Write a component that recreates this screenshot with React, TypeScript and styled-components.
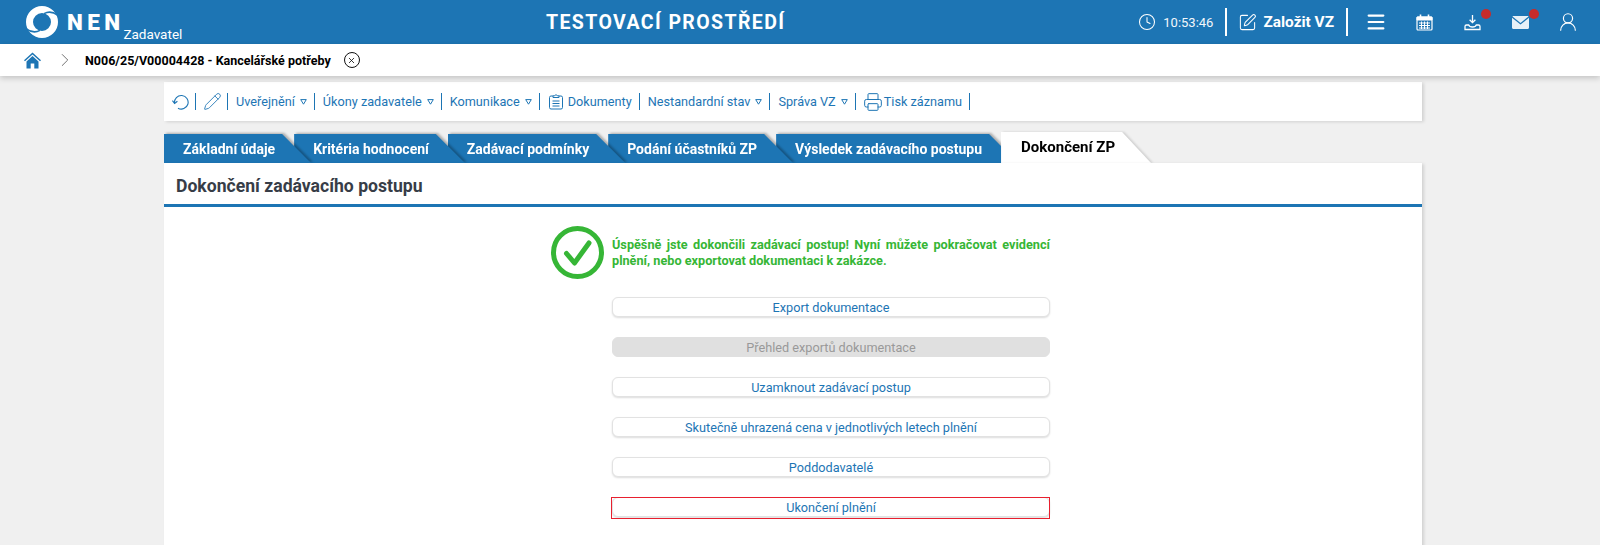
import { ReactNode } from "react";
import styled, { createGlobalStyle } from "styled-components";
import { Clock, Pencil, SquarePen, Printer, ChevronRight, X, UserRound, Menu } from "lucide-react";

const BLUE = "#1d75b4";

const GlobalStyle = createGlobalStyle`
  html, body {
    margin: 0;
    padding: 0;
    height: 545px;
    overflow: hidden;
    background: #f0f0f0;
    font-family: Roboto, "Liberation Sans", sans-serif;
  }
`;

const Header = styled.header`
  height: 44px;
  background: ${BLUE};
  color: #fff;
  display: flex;
  align-items: center;
`;

const Brand = styled.div`
  width: 546px;
  height: 44px;
  padding-left: 26px;
  box-sizing: border-box;
  display: flex;
  align-items: center;
`;

const BrandName = styled.span`
  margin-left: 9px;
  font-size: 22.5px;
  font-weight: 900;
  letter-spacing: 4.4px;
`;

const BrandRole = styled.span`
  align-self: flex-end;
  margin: 0 0 2px -1px;
  font-size: 13.5px;
  line-height: 15px;
`;

const EnvTitle = styled.div`
  width: 238px;
  text-align: center;
  white-space: nowrap;
  font-size: 19.5px;
  font-weight: 700;
  letter-spacing: 1.4px;
`;

const HeaderRight = styled.div`
  margin-left: auto;
  display: flex;
  align-items: center;
  padding-right: 24px;
`;

const HeaderGlyph = styled.span`
  width: 16px;
  height: 20px;
  display: flex;
  align-items: center;
  justify-content: center;
  svg {
    flex-shrink: 0;
  }
`;

const Time = styled.span`
  margin-left: 8px;
  font-size: 13px;
  color: #f2f7fb;
`;

const HeaderDivider = styled.span`
  width: 2px;
  height: 28px;
  margin: 0 12px;
  background: #fff;
`;

const CreateLabel = styled.span`
  margin-left: 8px;
  font-size: 15.4px;
  font-weight: 700;
`;

const HeaderIcon = styled.span<{ $first?: boolean }>`
  position: relative;
  width: 16px;
  height: 18px;
  margin-left: ${(p) => (p.$first ? "8px" : "32px")};
  display: flex;
  align-items: center;
  justify-content: center;
  svg {
    flex-shrink: 0;
  }
`;

const Dot = styled.span`
  position: absolute;
  top: -4px;
  left: 17px;
  width: 10px;
  height: 10px;
  border-radius: 50%;
  background: #c62b2b;
`;

const Breadcrumb = styled.nav`
  position: relative;
  height: 32px;
  background: #fff;
  box-shadow: 0 2px 6px rgba(0, 0, 0, 0.2);
  display: flex;
  align-items: center;
  padding-left: 24px;
`;

const Separator = styled.span`
  margin-left: 13px;
  display: flex;
  color: #666;
`;

const Crumb = styled.span`
  margin: 0 13px 0 9px;
  font-size: 12.5px;
  font-weight: 700;
  color: #000;
  white-space: nowrap;
`;

const CloseCircle = styled.span`
  width: 14px;
  height: 14px;
  border: 1px solid #111;
  border-radius: 50%;
  display: flex;
  align-items: center;
  justify-content: center;
`;

const Main = styled.main`
  width: 1258px;
  margin: 6px 0 0 164px;
`;

const Toolbar = styled.div`
  height: 39px;
  background: #fff;
  box-shadow: 2px 1px 3px rgba(0, 0, 0, 0.13);
  display: flex;
  align-items: center;
  padding-left: 8px;
  color: ${BLUE};
  font-size: 12.7px;
  white-space: nowrap;
`;

const ToolItem = styled.span`
  display: flex;
  align-items: center;
`;

const ToolIcon = styled.span<{ $width: number; $gap?: number }>`
  width: ${(p) => p.$width}px;
  height: 20px;
  margin-right: ${(p) => p.$gap ?? 0}px;
  display: flex;
  align-items: center;
  justify-content: center;
  svg {
    flex-shrink: 0;
  }
`;

const Caret = styled.svg`
  margin-left: 5px;
  margin-top: 1px;
`;

const ToolSep = styled.span`
  width: 1px;
  height: 17px;
  margin: 0 8px 0 7px;
  background: ${BLUE};
`;

const Tabs = styled.div`
  height: 31px;
  margin-top: 11px;
  display: flex;
  align-items: flex-end;
`;

const TabSlot = styled.div<{ $order: number; $active?: boolean }>`
  position: relative;
  z-index: ${(p) => p.$order};
  margin-right: -17px;
  filter: ${(p) =>
    p.$active
      ? "drop-shadow(2px 0 1px rgba(0, 0, 0, 0.14))"
      : "drop-shadow(2px -1px 1px rgba(0, 0, 0, 0.28))"};
`;

const TabShape = styled.div<{ $active?: boolean }>`
  height: ${(p) => (p.$active ? "31px" : "29px")};
  padding: ${(p) => (p.$active ? "0 36px 2px 20px" : "0 36px 0 19px")};
  box-sizing: border-box;
  display: flex;
  align-items: center;
  font-size: ${(p) => (p.$active ? "15px" : "14px")};
  font-weight: 700;
  white-space: nowrap;
  color: ${(p) => (p.$active ? "#000" : "#fff")};
  background: ${(p) => (p.$active ? "#fff" : BLUE)};
  clip-path: polygon(0 0, calc(100% - 29px) 0, 100% 100%, 0 100%);
`;

const Panel = styled.section`
  position: relative;
  z-index: 10;
  height: 400px;
  background: #fff;
  box-shadow: 2px 1px 3px rgba(0, 0, 0, 0.13);
`;

const PanelTitle = styled.h2`
  margin: 0;
  height: 41px;
  padding: 5px 0 0 12px;
  box-sizing: border-box;
  display: flex;
  align-items: center;
  font-size: 17.6px;
  font-weight: 700;
  color: #373d47;
`;

const PanelRule = styled.div`
  height: 3px;
  background: ${BLUE};
`;

const PanelBody = styled.div`
  padding: 19px 0 0 387px;
`;

const SuccessRow = styled.div`
  display: flex;
  align-items: center;
  gap: 8px;
`;

const SuccessText = styled.p`
  width: 438px;
  margin: 0;
  font-size: 12.7px;
  line-height: 15.5px;
  font-weight: 700;
  color: #36b636;
  text-align: justify;
`;

const Actions = styled.div`
  width: 438px;
  margin: 18px 0 0 61px;
  display: flex;
  flex-direction: column;
  gap: 20px;
`;

const ActionButton = styled.button<{ $flagged?: boolean }>`
  position: relative;
  height: 20px;
  padding: 0;
  box-sizing: border-box;
  border: 1px solid #e2e2e2;
  border-radius: 6px;
  background: #fff;
  box-shadow: 0 1px 2px rgba(0, 0, 0, 0.14);
  color: ${BLUE};
  font-family: inherit;
  font-size: 12.7px;
  line-height: 17px;
  &:disabled {
    background: #e0e0e0;
    border-color: #e0e0e0;
    box-shadow: none;
    color: #999;
  }
  &::after {
    content: "";
    display: ${(p) => (p.$flagged ? "block" : "none")};
    position: absolute;
    inset: -1px -1px -3px -2px;
    border: 1px solid #e8202f;
  }
`;

function Logo() {
  return (
    <svg width="32" height="32" viewBox="0 0 32 32" fill="none">
      <circle cx="16" cy="16" r="12.5" stroke="#fff" strokeWidth="7" />
      <path d="M32 9.5C27 5.5 22 5.5 18 7.6" stroke={BLUE} strokeWidth="1.5" />
      <path d="M0 22.5C5 26.5 10 26.5 14 24.4" stroke={BLUE} strokeWidth="1.5" />
    </svg>
  );
}

function RefreshIcon() {
  return (
    <svg width="17" height="17" viewBox="0 0 17 17" fill="none" stroke={BLUE} strokeWidth="1.1">
      <path d="M2.6 10.2A6.8 6.8 0 1 1 6 15.2" />
      <path d="M0.4 7.6l2.2 2.8 2.8-2.2" />
    </svg>
  );
}

function ClipboardIcon() {
  return (
    <svg width="14" height="17" viewBox="0 0 14 17" fill="none" stroke={BLUE} strokeWidth="1">
      <path d="M4 3H2A1.5 1.5 0 0 0 .5 4.5v10A1.5 1.5 0 0 0 2 16h10a1.5 1.5 0 0 0 1.5-1.5v-10A1.5 1.5 0 0 0 12 3h-2" />
      <path d="M4 4.5V2.8h1.6a1.5 1.5 0 0 1 2.8 0H10v1.7Z" />
      <path d="M3.5 8h7M3.5 10.5h7M3.5 13h7" />
    </svg>
  );
}

function CalendarIcon() {
  return (
    <svg width="17" height="17" viewBox="0 0 17 17" fill="none" stroke="#fff">
      <rect x="1" y="3" width="15" height="13" rx="1" fill={BLUE} strokeWidth="1.2" />
      <path d="M1 3h15v3H1z" fill="#fff" />
      <path d="M4.5 0.5v4M12.5 0.5v4" strokeWidth="1.6" />
      <path d="M3 9h11M3 11.5h11M3 14h11M5.5 7.5v7.5M8.5 7.5v7.5M11.5 7.5v7.5" strokeWidth="1" />
    </svg>
  );
}

function InboxIcon() {
  return (
    <svg width="17" height="17" viewBox="0 0 17 17" fill="none" stroke="#fff" strokeWidth="1.3">
      <path d="M8.5 1v7.5M5.6 5.8l2.9 2.9 2.9-2.9" />
      <path d="M1 12.5c0-1 .6-1.5 1.5-1.5h2.2c.5 1.4 2 2 3.8 2s3.3-.6 3.8-2h2.2c.9 0 1.5.5 1.5 1.5v3H1z" />
    </svg>
  );
}

function MailIcon() {
  return (
    <svg width="17" height="13" viewBox="0 0 17 13">
      <path d="M1.5 0h14c.4 0 .8.1 1 .4L8.5 7 .5.4c.2-.3.6-.4 1-.4Z" fill="#e8f1f8" />
      <path d="M0 1.8V11.5C0 12.4.6 13 1.5 13h14c.9 0 1.5-.6 1.5-1.5V1.8L8.5 8.6Z" fill="#e8f1f8" />
    </svg>
  );
}

function HomeIcon() {
  return (
    <svg width="17" height="17" viewBox="0 0 17 17" fill={BLUE}>
      <path d="M8.5 0.5 0 8.2l1 1.1 7.5-6.8L16 9.3l1-1.1Z" />
      <path d="M8.5 4 2.5 9.5V16.5h4.2v-5h3.6v5h4.2V9.5Z" />
    </svg>
  );
}

function CheckBadge() {
  return (
    <svg width="53" height="53" viewBox="0 0 53 53" fill="none" stroke="#36b636">
      <circle cx="26.5" cy="26.5" r="24" strokeWidth="5" />
      <path d="M15.5 27.5l8 9.5 14.5-20" strokeWidth="5" strokeLinecap="round" strokeLinejoin="round" />
    </svg>
  );
}

function DropItem({ children }: { children: ReactNode }) {
  return (
    <ToolItem>
      {children}
      <Caret width="7" height="6" viewBox="0 0 7 6" fill="none" stroke={BLUE}>
        <path d="M0.7 0.6h5.6L3.5 5.2Z" />
      </Caret>
    </ToolItem>
  );
}

const tabs = ["Základní údaje", "Kritéria hodnocení", "Zadávací podmínky", "Podání účastníků ZP", "Výsledek zadávacího postupu"];

const actions = ["Export dokumentace", "Přehled exportů dokumentace", "Uzamknout zadávací postup", "Skutečně uhrazená cena v jednotlivých letech plnění", "Poddodavatelé", "Ukončení plnění"];

export default function App() {
  return (
    <>
      <GlobalStyle />
      <Header>
        <Brand>
          <Logo />
          <BrandName>NEN</BrandName>
          <BrandRole>Zadavatel</BrandRole>
        </Brand>
        <EnvTitle>TESTOVACÍ PROSTŘEDÍ</EnvTitle>
        <HeaderRight>
          <HeaderGlyph>
            <Clock size={18} strokeWidth={1.4} />
          </HeaderGlyph>
          <Time>10:53:46</Time>
          <HeaderDivider />
          <HeaderGlyph>
            <SquarePen size={19} strokeWidth={1.3} />
          </HeaderGlyph>
          <CreateLabel>Založit VZ</CreateLabel>
          <HeaderDivider />
          <HeaderIcon $first>
            <Menu size={22} strokeWidth={2.4} />
          </HeaderIcon>
          <HeaderIcon>
            <CalendarIcon />
          </HeaderIcon>
          <HeaderIcon>
            <InboxIcon />
            <Dot />
          </HeaderIcon>
          <HeaderIcon>
            <MailIcon />
            <Dot />
          </HeaderIcon>
          <HeaderIcon>
            <UserRound size={22} strokeWidth={1.3} />
          </HeaderIcon>
        </HeaderRight>
      </Header>

      <Breadcrumb>
        <HomeIcon />
        <Separator>
          <ChevronRight size={22} strokeWidth={1} />
        </Separator>
        <Crumb>N006/25/V00004428 - Kancelářské potřeby</Crumb>
        <CloseCircle>
          <X size={9} strokeWidth={2.2} color="#111" />
        </CloseCircle>
      </Breadcrumb>

      <Main>
        <Toolbar>
          <ToolIcon $width={16}>
            <RefreshIcon />
          </ToolIcon>
          <ToolSep />
          <ToolIcon $width={16}>
            <Pencil size={19} strokeWidth={1.1} />
          </ToolIcon>
          <ToolSep />
          <DropItem>Uveřejnění</DropItem>
          <ToolSep />
          <DropItem>Úkony zadavatele</DropItem>
          <ToolSep />
          <DropItem>Komunikace</DropItem>
          <ToolSep />
          <ToolItem>
            <ToolIcon $width={16} $gap={4}>
              <ClipboardIcon />
            </ToolIcon>
            Dokumenty
          </ToolItem>
          <ToolSep />
          <DropItem>Nestandardní stav</DropItem>
          <ToolSep />
          <DropItem>Správa VZ</DropItem>
          <ToolSep />
          <ToolItem>
            <ToolIcon $width={18} $gap={2}>
              <Printer size={20} strokeWidth={1.2} />
            </ToolIcon>
            Tisk záznamu
          </ToolItem>
          <ToolSep />
        </Toolbar>

        <Tabs>
          {tabs.map((tab, i) => (
            <TabSlot key={tab} $order={tabs.length - i + 1}>
              <TabShape>{tab}</TabShape>
            </TabSlot>
          ))}
          <TabSlot $order={8} $active>
            <TabShape $active>Dokončení ZP</TabShape>
          </TabSlot>
        </Tabs>

        <Panel>
          <PanelTitle>Dokončení zadávacího postupu</PanelTitle>
          <PanelRule />
          <PanelBody>
            <SuccessRow>
              <CheckBadge />
              <SuccessText>
                Úspěšně jste dokončili zadávací postup! Nyní můžete pokračovat evidencí plnění, nebo exportovat
                dokumentaci k zakázce.
              </SuccessText>
            </SuccessRow>
            <Actions>
              {actions.map((label, i) => (
                <ActionButton key={label} disabled={i === 1} $flagged={i === 5}>
                  {label}
                </ActionButton>
              ))}
            </Actions>
          </PanelBody>
        </Panel>
      </Main>
    </>
  );
}
